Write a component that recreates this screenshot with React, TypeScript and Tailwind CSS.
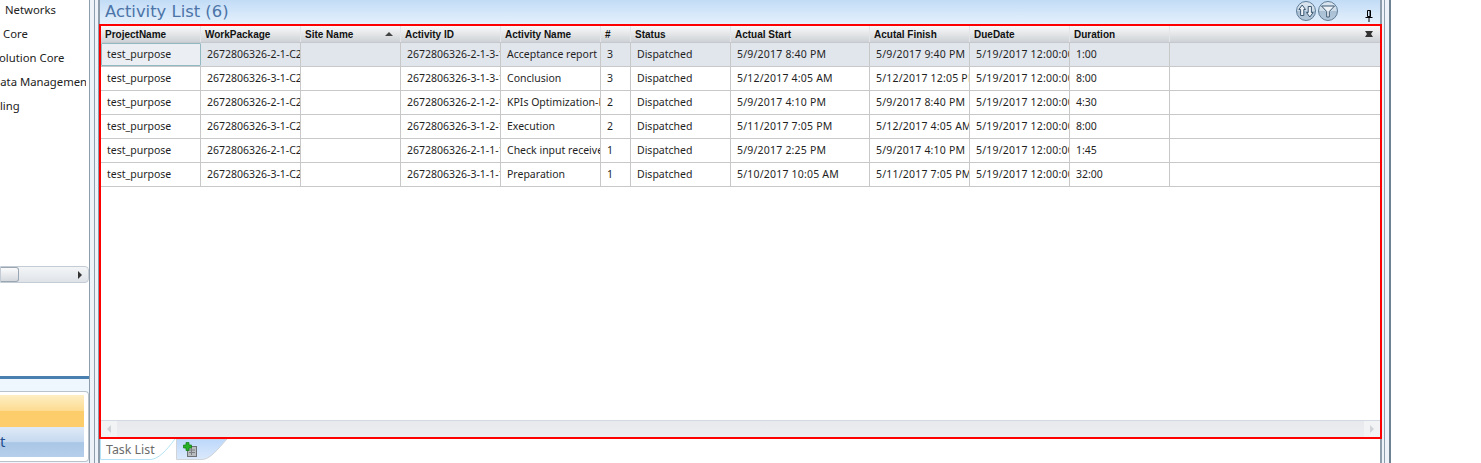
const columns = ['ProjectName', 'WorkPackage', 'Site Name', 'Activity ID', 'Activity Name', '#', 'Status', 'Actual Start', 'Acutal Finish', 'DueDate', 'Duration', ''];

const rows = [
  ['test_purpose', '2672806326-2-1-C2', '', '2672806326-2-1-3-1', 'Acceptance report', '3', 'Dispatched', '5/9/2017 8:40 PM', '5/9/2017 9:40 PM', '5/19/2017 12:00:00 AM', '1:00', ''],
  ['test_purpose', '2672806326-3-1-C2', '', '2672806326-3-1-3-1', 'Conclusion', '3', 'Dispatched', '5/12/2017 4:05 AM', '5/12/2017 12:05 PM', '5/19/2017 12:00:00 AM', '8:00', ''],
  ['test_purpose', '2672806326-2-1-C2', '', '2672806326-2-1-2-1', 'KPIs Optimization-Phase', '2', 'Dispatched', '5/9/2017 4:10 PM', '5/9/2017 8:40 PM', '5/19/2017 12:00:00 AM', '4:30', ''],
  ['test_purpose', '2672806326-3-1-C2', '', '2672806326-3-1-2-1', 'Execution', '2', 'Dispatched', '5/11/2017 7:05 PM', '5/12/2017 4:05 AM', '5/19/2017 12:00:00 AM', '8:00', ''],
  ['test_purpose', '2672806326-2-1-C2', '', '2672806326-2-1-1-1', 'Check input received', '1', 'Dispatched', '5/9/2017 2:25 PM', '5/9/2017 4:10 PM', '5/19/2017 12:00:00 AM', '1:45', ''],
  ['test_purpose', '2672806326-3-1-C2', '', '2672806326-3-1-1-1', 'Preparation', '1', 'Dispatched', '5/10/2017 10:05 AM', '5/11/2017 7:05 PM', '5/19/2017 12:00:00 AM', '32:00', ''],
];

const navItems = [
  { label: 'Networks', cls: 'ml-[5px]' },
  { label: 'Core', cls: 'ml-[3px]' },
  { label: 'Evolution Core', cls: 'ml-[-13px]' },
  { label: 'Data Management', cls: 'ml-[-8px]' },
  { label: 'Profiling', cls: 'ml-[-25px]' },
];

const gridCols = 'grid grid-cols-[100px_100px_100px_100px_100px_30px_100px_139px_100px_100px_100px_1fr]';

function RoundButton({ children }: { children: React.ReactNode }) {
  return (
    <div className="w-[20px] h-[20px] rounded-full border border-[#5f7d97] bg-[linear-gradient(#dbe6f0_0%,#cddbe8_50%,#a9bfd3_52%,#b4c8da_100%)] flex items-center justify-center">
      {children}
    </div>
  );
}

function App() {
  return (
    <div className="w-[1481px] h-[463px] bg-white flex overflow-hidden text-[10.5px] text-[#1f1f1f] font-['Noto_Sans','DejaVu_Sans',sans-serif]">
      {/* Left navigation */}
      <div className="w-[89px] shrink-0 flex flex-col overflow-hidden">
        <div className="h-[266px] w-[86px] shrink-0 overflow-hidden text-[11.3px]">
          {navItems.map((item) => (
            <div key={item.label} className={`h-[24px] leading-[20px] whitespace-nowrap text-[#222] ${item.cls}`}>
              {item.label}
            </div>
          ))}
        </div>
        <div className="h-[17px] shrink-0 flex items-center justify-between border border-[#c3ccd4] bg-gradient-to-b from-[#f3f5f7] to-[#dfe3e8] rounded-r-sm">
          <div className="w-[18px] h-[15px] bg-gradient-to-b from-[#fbfbfc] to-[#d5d9de] border border-l-0 border-[#9aa6b2] rounded-r-[3px]"></div>
          <div className="w-0 h-0 mr-[6px] border-y-[4px] border-y-transparent border-l-[4px] border-l-[#333]"></div>
        </div>
        <div className="h-[93px] shrink-0"></div>
        <div className="h-[3px] shrink-0 bg-[#4a80b0]"></div>
        <div className="flex-1 bg-[#eff7fe] pt-[12px]">
          <div className="h-[71px] border border-l-0 border-[#b9c2ca] rounded-r-sm bg-white pt-[3px] pr-[4px]">
            <div className="h-[32px] flex flex-col">
              <div className="h-[16px] bg-gradient-to-b from-[#fdeec3] to-[#fddb90]"></div>
              <div className="h-[16px] bg-[#fdcd6c]"></div>
            </div>
            <div className="h-[30px] text-[#26518f] text-[15px] leading-[29px] text-right pr-[82px] bg-[linear-gradient(#dfeaf7_0%,#c6d9ef_50%,#a9c6e6_52%,#b5cfea_100%)]">
              t
            </div>
          </div>
        </div>
      </div>

      {/* Splitter */}
      <div className="w-[10px] shrink-0 bg-[#eef3fa] border-l border-l-[#8e9dab] border-r border-r-[#8e9dab]">
        <div className="w-[5px] h-full border-r border-r-[#8e9dab]"></div>
      </div>

      {/* Main panel */}
      <div className="w-[1283px] shrink-0 flex flex-col">
        <div className="h-[24px] shrink-0 flex items-start justify-between bg-gradient-to-b from-[#c2dcf6] to-[#e6f1fc] pl-[5px] border-x border-x-[#8e9dab] border-r-2">
          <span className="text-[16.4px] leading-[24px] text-[#4c74a8] font-['DejaVu_Sans',sans-serif]">Activity List (6)</span>
          <div className="flex items-start gap-[2px] pt-[1px] pr-[7px]">
            <RoundButton>
              <svg width="16" height="16" viewBox="0 0 16 16" fill="#eef3f8" stroke="#3c5872" strokeWidth="1">
                <path d="M4.2 2 L7.5 6.5 H5.8 V12.5 H2.6 V6.5 H0.9 Z" />
                <path d="M11.8 14 L15.1 9.5 H13.4 V3.5 H10.2 V9.5 H8.5 Z" />
              </svg>
            </RoundButton>
            <RoundButton>
              <svg width="16" height="16" viewBox="0 0 16 16" fill="#eef3f8" stroke="#3c5872" strokeWidth="1">
                <path d="M1.5 3 H14.5 L9.3 8.5 V14 H6.7 V8.5 Z" />
              </svg>
            </RoundButton>
            <svg className="ml-[25px] mt-[9px]" width="8" height="12" viewBox="0 0 8 12" fill="none" stroke="#000">
              <path d="M2.5 0.5 H5.5 V6.5 H2.5 Z" />
              <path d="M5 1 V6.5" />
              <path d="M0.5 7.5 H7.5" />
              <path d="M4 8 V12" />
            </svg>
          </div>
        </div>

        {/* Grid */}
        <div className="h-[415px] shrink-0 border-2 border-[#ff0000] flex flex-col bg-white">
          <div className={`${gridCols} h-[16px] shrink-0 bg-gradient-to-b from-[#fafafa] to-[#ced2d6] text-[10px] font-bold text-[#111] font-['Liberation_Sans',sans-serif]`}>
            {columns.map((col, i) => (
              <div key={i} className="relative pl-[4px] leading-[18px] border-r border-r-[#e3e5e8] whitespace-nowrap overflow-hidden last:border-r-0">
                {col}
                {col === 'Site Name' && (
                  <div className="absolute right-[7px] top-[6px] w-0 h-0 border-x-[4px] border-x-transparent border-b-[4px] border-b-[#444]"></div>
                )}
                {i === columns.length - 1 && (
                  <div className="absolute right-[7px] top-[5px] w-[8px] h-[6px] bg-[#333] [clip-path:polygon(0_0,100%_0,75%_50%,100%_100%,0_100%,25%_50%)]"></div>
                )}
              </div>
            ))}
          </div>
          <div className="flex-1 border-t border-t-[#c5c8cc]">
            {rows.map((row, r) => (
              <div key={r} className={`${gridCols} h-[24px] border-b border-b-[#c8c8c8] ${r === 0 ? 'bg-[#e1e5ec]' : ''}`}>
                {row.map((cell, c) => (
                  <div
                    key={c}
                    className={`whitespace-nowrap overflow-hidden ${c >= 7 && c <= 9 ? 'tracking-[0.2px]' : ''} ${
                      r === 0 && c === 0
                        ? 'pl-[5px] leading-[20px] bg-[#ebeff4] border border-[#92b9c2] rounded-[1px]'
                        : 'pl-[6px] leading-[22px] border-r border-r-[#c8c8c8] last:border-r-0'
                    }`}
                  >
                    {cell}
                  </div>
                ))}
              </div>
            ))}
          </div>
          <div className="h-[17px] shrink-0 flex items-center justify-between border-t border-t-[#d3dae3] bg-gradient-to-b from-[#e7e9ed] to-[#eceef1]">
            <div className="w-[16px] h-full flex items-center justify-center bg-[#f2f3f5]">
              <div className="w-0 h-0 border-y-[4px] border-y-transparent border-r-[4px] border-r-[#d0d3d8]"></div>
            </div>
            <div className="w-[16px] h-full flex items-center justify-center bg-[#f2f3f5]">
              <div className="w-0 h-0 border-y-[4px] border-y-transparent border-l-[4px] border-l-[#d0d3d8]"></div>
            </div>
          </div>
        </div>

        {/* Tabs */}
        <div className="flex-1 flex items-start border-l border-l-[#8e9dab] border-r-2 border-r-[#8e9dab]">
          <div className="relative w-[76px] h-[21px] pl-[6px] leading-[22px] text-[12.4px] text-[#6b6b6b]">
            <svg className="absolute inset-0" width="76" height="21" viewBox="0 0 76 21" fill="none">
              <path d="M0.5 0 V20.5 H50 C58 20.5 66 12 75 0" stroke="#b4e3f7" />
            </svg>
            <span className="relative">Task List</span>
          </div>
          <div className="relative w-[52px] h-[21px]">
            <svg className="absolute inset-0" width="52" height="21" viewBox="0 0 52 21">
              <defs>
                <linearGradient id="tabFill" x1="0" y1="0" x2="0" y2="1">
                  <stop offset="0" stopColor="#bcd8fb" />
                  <stop offset="1" stopColor="#dbe9fb" />
                </linearGradient>
              </defs>
              <path d="M0.5 0 V20.5 H26 C34 20.5 42 10 51 0 Z" fill="url(#tabFill)" stroke="#d0d4d8" />
            </svg>
            <svg className="absolute left-[7px] top-[3px]" width="15" height="16" viewBox="0 0 15 16">
              <rect x="4.5" y="4.5" width="9" height="10" fill="#b9bdc0" stroke="#6d7175" />
              <path d="M6 8 H12 M6 10.5 H12 M8.5 6 V13" stroke="#7c8084" />
              <path d="M3 0.5 H6 V3 H8.5 V6 H6 V8.5 H3 V6 H0.5 V3 H3 Z" fill="#25b025" stroke="#127a12" strokeWidth="0.7" />
            </svg>
          </div>
        </div>
      </div>

      {/* Right splitter */}
      <div className="w-[9px] shrink-0 h-full bg-[#eef3fa] flex">
        <div className="w-[3px] border-r border-r-[#8e9dab]"></div>
        <div className="w-[4px]"></div>
        <div className="w-[2px] bg-[#6f8294]"></div>
      </div>
    </div>
  );
}

export default App;
